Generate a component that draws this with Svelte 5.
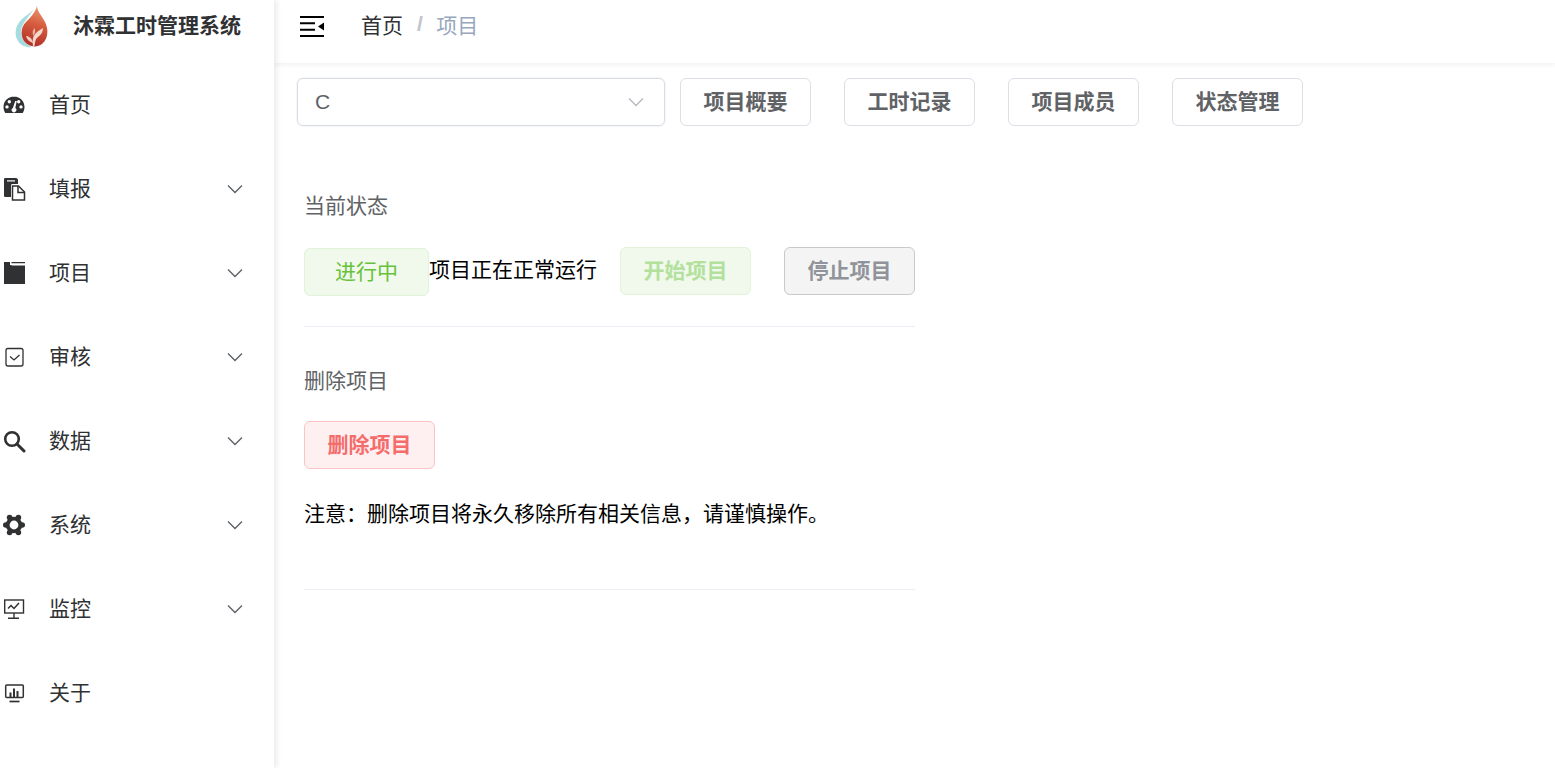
<script>
  const menu = [
    { label: "首页", icon: "gauge" },
    { label: "填报", icon: "docs", arrow: true },
    { label: "项目", icon: "folder", arrow: true },
    { label: "审核", icon: "check", arrow: true },
    { label: "数据", icon: "search", arrow: true },
    { label: "系统", icon: "gear", arrow: true },
    { label: "监控", icon: "monitor", arrow: true },
    { label: "关于", icon: "chart" },
  ]
  const tabs = ["项目概要", "工时记录", "项目成员", "状态管理"]
</script>

<div class="layout">
  <aside class="sidebar">
    <div class="brand">
      <svg class="logo" width="33" height="42" viewBox="0 0 33 42">
        <defs>
          <linearGradient id="flame" x1="0.6" y1="0" x2="0.4" y2="1">
            <stop offset="0" stop-color="#ec9670" />
            <stop offset="0.45" stop-color="#d65c3e" />
            <stop offset="1" stop-color="#b02f28" />
          </linearGradient>
        </defs>
        <path d="M20 1C18 6 11 9 6 14C0 20-1 29 3 35C6 40 12 42 17 41C9 38 5 31 6 24C8 15 16 9 20 1Z" fill="#a5dcdf" />
        <path d="M22 0C22 5 27 10 30 16C34 24 33 33 27 38C22 42 13 41 9 35C5 29 6 21 11 16C15 12 20 7 22 0Z" fill="url(#flame)" />
        <path d="M18 40C17 34 18 30 21 27C23 25 26 23 28 22C28 26 26 29 23 31C21 32 20 35 19.500 40Z" fill="#f3d8cc" />
        <path d="M18 37C15 36 12 34 11 30C14 30 17 32 18 37Z" fill="#f0cdbf" />
        <path d="M18.500 30C17 27 17.500 24 19.500 22C20.500 24 20.500 27 18.500 30Z" fill="#e9b3a1" />
      </svg>
      <span class="title">沐霖工时管理系统</span>
    </div>
    <nav>
      {#each menu as item}
        <div class="item">
          <svg class="icon" width="24" height="24" viewBox="0 0 24 24">
            {#if item.icon === "gauge"}
              <path fill-rule="evenodd" fill="#303133" d="M12 3.500C5.600 3.500 1.500 8.600 1.500 14c0 2.400.8 4.500 1.800 6h17.400c1-1.500 1.800-3.600 1.800-6 0-5.400-4.100-10.500-10.500-10.500ZM7.300 7a1.700 1.700 0 1 1 0 3.400 1.700 1.700 0 0 1 0-3.400Zm9.400 0a1.700 1.700 0 1 1 0 3.400 1.700 1.700 0 0 1 0-3.400ZM5 12.200a1.700 1.700 0 1 1 0 3.400 1.700 1.700 0 0 1 0-3.400Zm14 0a1.700 1.700 0 1 1 0 3.400 1.700 1.700 0 0 1 0-3.400ZM14.800 8l-1.500 7.100a2.300 2.300 0 1 1-2.400-.1L13.200 8h1.600Z" />
            {:else if item.icon === "docs"}
              <path fill="#303133" d="M3 1h11c1 0 2 1 2 2v4H10.500C9.600 7 9 7.600 9 8.500V20H3c-1 0-1-1-1-2V3c0-1 0-2 1-2Z" />
              <path fill="#fff" d="M5 3.300h8v1.200H5z" />
              <path fill="#fff" stroke="#303133" stroke-width="1.500" d="M10.500 9h6l6 6v8h-12Z" />
              <path fill="none" stroke="#303133" stroke-width="1.500" d="M16 9v6.500h6.500" />
            {:else if item.icon === "folder"}
              <path fill="#303133" d="M2 1h6v3h1.500V1H23v1.300H9.500V4.500H23V23H2z" />
            {:else if item.icon === "check"}
              <rect x="4" y="3.500" width="17" height="17.500" rx="2" fill="none" stroke="#303133" stroke-width="1.300" />
              <path d="M8 11.500l4 3.500 5.500-5" fill="none" stroke="#303133" stroke-width="1.300" />
            {:else if item.icon === "search"}
              <circle cx="10" cy="10" r="6.800" fill="none" stroke="#303133" stroke-width="2.600" />
              <path d="M15 15l7 7" stroke="#303133" stroke-width="3" stroke-linecap="round" />
            {:else if item.icon === "gear"}
              <g fill="#303133">
                <circle cx="12" cy="12" r="8.300" />
                <circle cx="3.800" cy="12" r="2.800" />
                <circle cx="20.200" cy="12" r="2.800" />
                <circle cx="7.600" cy="4.500" r="2.800" />
                <circle cx="16.400" cy="4.500" r="2.800" />
                <circle cx="7.600" cy="19.500" r="2.800" />
                <circle cx="16.400" cy="19.500" r="2.800" />
              </g>
              <circle cx="12" cy="12" r="4.400" fill="#fff" />
            {:else if item.icon === "monitor"}
              <rect x="2.700" y="3" width="18.800" height="13" fill="none" stroke="#303133" stroke-width="1.400" />
              <path d="M6 11.500l3-3 3 3 5-5.500" fill="none" stroke="#303133" stroke-width="1.500" />
              <path d="M12 16v5M6 21.300h11" stroke="#303133" stroke-width="1.400" />
            {:else}
              <rect x="3.700" y="4" width="17.600" height="12.500" rx="1" fill="none" stroke="#303133" stroke-width="1.500" />
              <path d="M8.500 16v-4.500M12 16V7.500M15.500 16v-6" stroke="#303133" stroke-width="2" />
              <path d="M7.500 20.500h10" stroke="#303133" stroke-width="1.700" />
            {/if}
          </svg>
          <span class="label">{item.label}</span>
          {#if item.arrow}
            <svg class="arrow" width="16" height="10" viewBox="0 0 16 10">
              <path d="M1 1.500l7 7 7-7" fill="none" stroke="#5a5e66" stroke-width="1.300" />
            </svg>
          {/if}
        </div>
      {/each}
    </nav>
  </aside>

  <div class="main">
    <header class="topbar">
      <svg class="fold" width="24" height="21" viewBox="0 0 24 21">
        <path d="M0 1h24M0 7.300h15M0 13.700h15M0 20h24" stroke="#000" stroke-width="2" />
        <path d="M24 6.500v8l-6-4z" fill="#000" />
      </svg>
      <div class="crumbs">
        <span class="home">首页</span>
        <span class="sep">/</span>
        <span class="current">项目</span>
      </div>
    </header>

    <div class="content">
      <div class="toolbar">
        <div class="select">
          <span>C</span>
          <svg width="16" height="10" viewBox="0 0 16 10">
            <path d="M1 1.500l7 7 7-7" fill="none" stroke="#b4b7bd" stroke-width="1.300" />
          </svg>
        </div>
        <div class="tabs">
          {#each tabs as tab}
            <button class="btn">{tab}</button>
          {/each}
        </div>
      </div>

      <section class="panel">
        <h4 class="first">当前状态</h4>
        <div class="status">
          <span class="tag">进行中</span>
          <span class="desc">项目正在正常运行</span>
          <button class="btn start">开始项目</button>
          <button class="btn stop">停止项目</button>
        </div>
        <hr class="rule-a" />
        <h4>删除项目</h4>
        <button class="btn danger">删除项目</button>
        <p class="note">注意：删除项目将永久移除所有相关信息，请谨慎操作。</p>
        <hr class="rule-b" />
      </section>
    </div>
  </div>
</div>

<style>
  :global(body) {
    background: #fff;
  }
  .layout {
    display: flex;
    height: 768px;
    overflow: hidden;
    font-family: "Liberation Sans", "Noto Sans CJK SC", sans-serif;
    font-size: 21px;
  }
  .sidebar {
    width: 274px;
    flex: none;
    background: #fff;
    box-shadow: 2px 0 6px rgba(0, 21, 41, 0.1);
    z-index: 2;
  }
  .brand {
    height: 63px;
    display: flex;
    align-items: center;
    padding-left: 15px;
    box-sizing: border-box;
  }
  .logo {
    margin: -10px 0 0 0;
  }
  .title {
    margin-left: 25px;
    font-weight: 700;
    color: #303133;
    line-height: 1;
    margin-top: -12px;
  }
  .item {
    height: 84px;
    display: flex;
    align-items: center;
    padding-left: 2px;
    color: #303133;
  }
  .icon {
    flex: none;
  }
  .label {
    margin-left: 23px;
    padding-bottom: 5px;
    flex: 1;
  }
  .arrow {
    margin-right: 31px;
  }
  .main {
    flex: 1;
    min-width: 0;
  }
  .topbar {
    height: 63px;
    box-sizing: border-box;
    display: flex;
    align-items: center;
    padding: 0 0 11px 26px;
    background: #fff;
    box-shadow: 0 1px 6px rgba(0, 21, 41, 0.08);
    position: relative;
  }
  .crumbs {
    margin-left: 37px;
    padding-bottom: 4px;
    display: flex;
    align-items: center;
  }
  .home {
    color: #303133;
  }
  .sep {
    margin: 0 13.500px 0 14px;
    color: #c0c4cc;
    font-weight: 700;
  }
  .current {
    color: #97a8be;
  }
  .content {
    padding: 15px 0 0 23px;
  }
  .toolbar {
    display: flex;
    gap: 15px;
  }
  .select {
    width: 368px;
    height: 48px;
    box-sizing: border-box;
    border: 1.500px solid #d9dce5;
    border-radius: 6px;
    display: flex;
    align-items: center;
    justify-content: space-between;
    padding: 0 20px 0 17px;
    color: #606266;
    box-shadow: 0 0 2px #dcdfe6;
  }
  .tabs {
    display: flex;
    gap: 33px;
  }
  .btn {
    width: 131px;
    height: 48px;
    padding: 0 0 4px;
    box-sizing: border-box;
    border: 1.500px solid #dcdfe6;
    border-radius: 6px;
    background: #fff;
    color: #606266;
    font: inherit;
    font-weight: 700;
  }
  .panel {
    width: 611px;
    margin-left: 7px;
    color: #000;
  }
  h4 {
    margin: 0;
    font-size: 21px;
    font-weight: 400;
    color: #606266;
    line-height: 30px;
  }
  h4.first {
    margin-top: 65px;
  }
  .status {
    display: flex;
    align-items: center;
    margin-top: 25px;
  }
  .tag {
    width: 125px;
    height: 48px;
    box-sizing: border-box;
    padding-bottom: 5px;
    display: flex;
    align-items: center;
    justify-content: center;
    background: #f0f9eb;
    border: 1.500px solid #e1f3d8;
    border-radius: 6px;
    color: #67c23a;
    margin-top: 2px;
  }
  .desc {
    margin-right: 23px;
    padding-bottom: 6px;
  }
  .start {
    background: #f0f9eb;
    border-color: #e1f3d8;
    color: #b3e19d;
  }
  .stop {
    margin-left: 33px;
    background: #f4f4f5;
    border-color: #c8c9cc;
    color: #909399;
  }
  hr {
    border: 0;
    border-top: 1.500px solid #ebeef5;
    margin: 0;
  }
  .rule-a {
    margin: 30px 0 39px;
  }
  .danger {
    display: block;
    margin-top: 25px;
    background: #fef0f0;
    border-color: #fbc4c4;
    color: #f56c6c;
  }
  .note {
    margin: 29px 0 0;
    line-height: 32px;
  }
  .rule-b {
    margin-top: 59px;
  }
</style>
